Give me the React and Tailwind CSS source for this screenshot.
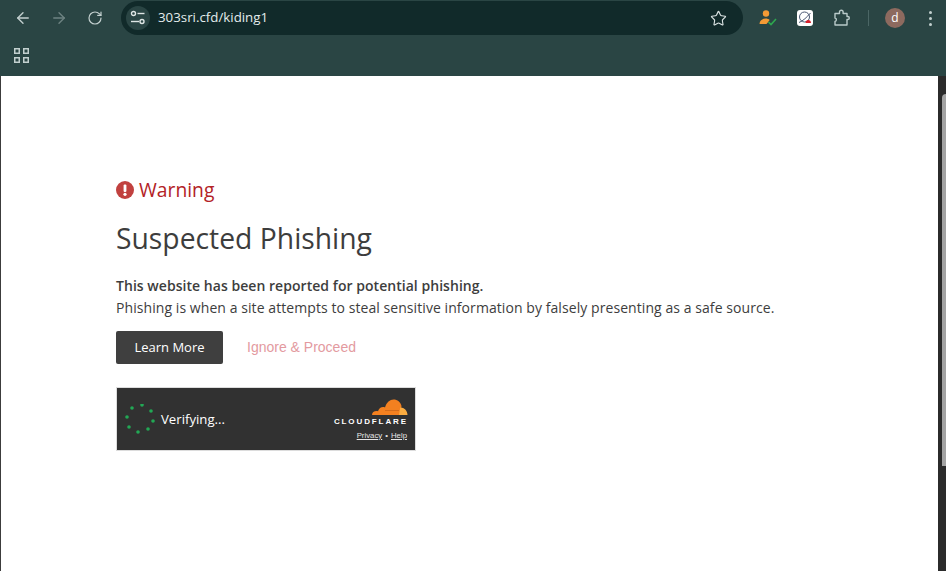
import { ArrowLeft, ArrowRight, RotateCw, Star } from 'lucide-react';

const uiFont = 'font-["Open_Sans",sans-serif]';

function TuneIcon() {
    return (
        <svg width="16" height="16" viewBox="0 0 16 16" fill="none" stroke="#dfe6e5" strokeWidth="1.4">
            <circle cx="3.5" cy="3.5" r="2" />
            <path d="M7.5 3.5h7" />
            <path d="M1 11.5h8" />
            <circle cx="12" cy="11.5" r="2" />
        </svg>
    );
}

function AccountCheck() {
    return (
        <svg width="20" height="18" viewBox="0 0 20 18">
            <circle cx="7" cy="4.5" r="3.2" fill="#f59a35" />
            <path d="M0.5 15c0-3.6 3-5.5 6-5.5 1.8 0 3.2 0.5 4.2 1.5L7.5 15z" fill="#f59a35" />
            <path d="M9.5 13l2.5 2.5 5-5.5" fill="none" stroke="#2ea84f" strokeWidth="1.6" />
        </svg>
    );
}

function GaugeExtension() {
    return (
        <svg width="16" height="16" viewBox="0 0 16 16" className="rounded-[3px] bg-white">
            <circle cx="7.5" cy="7" r="5" fill="none" stroke="#4a5873" strokeWidth="1" />
            <path d="M2 12.5C6 11 10 7 13.5 3" fill="none" stroke="#4a5873" strokeWidth="1" />
            <path d="M8.5 13c0-2 1.2-3 2.8-3s2.7 1 2.7 3z" fill="#d9202c" />
        </svg>
    );
}

function ExtensionIcon() {
    return (
        <svg width="16" height="18" viewBox="0 0 16 18" fill="none" stroke="#b9cac9" strokeWidth="1.4" strokeLinejoin="round">
            <path d="M1 4.500H5.500V3a1.800 1.800 0 0 1 3.600 0v1.500H13V7.500h0.800a1.500 1.500 0 0 1 0 3H13V16H1V12.500a1.800 1.800 0 0 0 0-3.500V4.500z" />
        </svg>
    );
}

function AppsIcon() {
    return (
        <svg width="15" height="15" viewBox="0 0 15 15" fill="none" stroke="#c3d0cf" strokeWidth="1.5">
            <rect x="0.75" y="0.75" width="4.5" height="4.5" />
            <rect x="9.75" y="0.75" width="4.5" height="4.5" />
            <rect x="0.75" y="9.75" width="4.5" height="4.5" />
            <rect x="9.75" y="9.75" width="4.5" height="4.5" />
        </svg>
    );
}

function WarningIcon() {
    return (
        <svg width="18" height="18" viewBox="0 0 18 18">
            <circle cx="9" cy="9" r="9" fill="#c1413f" />
            <rect x="7.6" y="3.5" width="2.8" height="7.5" rx="1" fill="#fff" />
            <circle cx="9" cy="13.3" r="1.6" fill="#fff" />
        </svg>
    );
}

function Spinner() {
    const dots = [
        [7, 4], [17, 1], [26, 7], [28, 17], [23, 25], [13, 28], [4, 23], [2, 13],
    ];
    return (
        <svg width="30" height="30" viewBox="0 0 30 30" className="shrink-0">
            {dots.map(([cx, cy]) => (
                <circle key={`${cx}-${cy}`} cx={cx} cy={cy} r="1.8" fill="#22a855" />
            ))}
        </svg>
    );
}

function CloudflareLogo() {
    return (
        <svg width="36" height="17" viewBox="0 0 36 17">
            <path d="M0 16c0-2.500 2-4 4.500-4 0.500 0 1 0 1.500 0.200C6.800 9.500 9 8 11 8c0.800 0 1.500 0.200 2 0.400C14.500 3.500 18 0.500 21.500 0.500c4 0 7 2.500 8 6.500l-1 9z" fill="#f38020" />
            <path d="M27 16c0.500-2.500 0.800-5 1.200-7.500 3.500-0.300 7.300 2.800 7.300 7.500z" fill="#fbad41" />
            <path d="M13 11.500h14" stroke="#c9661a" strokeWidth="0.8" />
        </svg>
    );
}

export default function App() {
    return (
        <div className="flex h-[571px] w-[946px] flex-col overflow-hidden bg-white">
            {/* Шапка браузера */}
            <div className={`h-[76px] shrink-0 bg-[#2a4544] ${uiFont}`}>
                <div className="flex h-[36px] items-center pl-[14px]">
                    <ArrowLeft size={18} strokeWidth={1.8} className="text-[#c3d0cf]" />
                    <ArrowRight size={18} strokeWidth={1.8} className="ml-[18px] text-[#6e8382]" />
                    <RotateCw size={16} strokeWidth={1.8} className="ml-[19px] text-[#c3d0cf]" />
                    <div className="ml-[18px] flex h-[34px] w-[622px] items-center rounded-full bg-[#112a2a] pl-[5px] pr-[16px]">
                        <div className="flex h-[24px] w-[24px] items-center justify-center rounded-full bg-[#2a4544]">
                            <TuneIcon />
                        </div>
                        <span className="ml-[8px] text-[13.3px] text-[#e3ecec]">303sri.cfd/kiding1</span>
                        <Star size={17} strokeWidth={1.6} className="ml-auto text-[#dbe3e3]" />
                    </div>
                    <div className="ml-[16px]"><AccountCheck /></div>
                    <div className="ml-[18px]"><GaugeExtension /></div>
                    <div className="ml-[21px]"><ExtensionIcon /></div>
                    <div className="ml-[18px] h-[16px] w-px bg-[#4b6665]" />
                    <div className="ml-[16px] flex h-[20px] w-[20px] items-center justify-center rounded-full bg-[#8d6a5f] text-[12px] text-white">d</div>
                    <div className="ml-[24px] flex shrink-0 flex-col gap-[3px]">
                        <span className="h-[3px] w-[3px] rounded-full bg-[#c3d0cf]" />
                        <span className="h-[3px] w-[3px] rounded-full bg-[#c3d0cf]" />
                        <span className="h-[3px] w-[3px] rounded-full bg-[#c3d0cf]" />
                    </div>
                </div>
                <div className="flex h-[40px] items-center pl-[14px] pb-[2px]">
                    <AppsIcon />
                </div>
            </div>

            <div className="flex min-h-0 flex-1">
                {/* Страница */}
                <div className={`flex-1 border-l border-[#3c3c3c] pl-[115px] pt-[101px] text-[#3d3d3d] ${uiFont}`}>
                    <div className="flex h-[26px] items-center gap-[5px] text-[#b32226]">
                        <WarningIcon />
                        <span className="text-[19.3px] font-medium">Warning</span>
                    </div>
                    <h1 className="mt-[15px] text-[28.3px] leading-[40px]">Suspected Phishing</h1>
                    <p className="mt-[17px] text-[14px] font-semibold leading-[22px] tracking-[0.04px]">This website has been reported for potential phishing.</p>
                    <p className="text-[14px] leading-[22px] tracking-[0.07px]">Phishing is when a site attempts to steal sensitive information by falsely presenting as a safe source.</p>
                    <div className="mt-[12px] flex items-center">
                        <button className="h-[33px] w-[107px] rounded-[2px] bg-[#3f3f3f] text-[13px] text-white">Learn More</button>
                        <a className='ml-[24px] font-["Liberation_Sans",sans-serif] text-[14px] text-[#e39a9f]'>Ignore &amp; Proceed</a>
                    </div>
                    <div className="mt-[23px] flex h-[64px] w-[300px] items-center border border-[#dcdcdc] bg-[#313131] pl-[8px] pr-[7px]">
                        <Spinner />
                        <span className="ml-[6px] pt-[2px] text-[13.2px] text-white">Verifying...</span>
                        <div className="ml-auto flex flex-col items-end pt-[1px]">
                            <CloudflareLogo />
                            <span className='mt-[1px] font-["Liberation_Sans",sans-serif] text-[8px] font-bold leading-[10px] tracking-[1.9px] text-white'>CLOUDFLARE</span>
                            <div className='mt-[4px] flex gap-[3px] pr-[1px] font-["Liberation_Sans",sans-serif] text-[7.8px] leading-[10px] text-[#e5e5e5]'>
                                <span className="underline">Privacy</span>
                                <span>•</span>
                                <span className="underline">Help</span>
                            </div>
                        </div>
                    </div>
                </div>

                {/* Полоса прокрутки */}
                <div className="w-[8px] shrink-0 bg-[#2b2b2b] pl-[4px] pt-[18px]">
                    <div className="h-[372px] w-[4px] rounded-tl-[4px] bg-[#a3a3a3]" />
                </div>
            </div>
        </div>
    );
}
